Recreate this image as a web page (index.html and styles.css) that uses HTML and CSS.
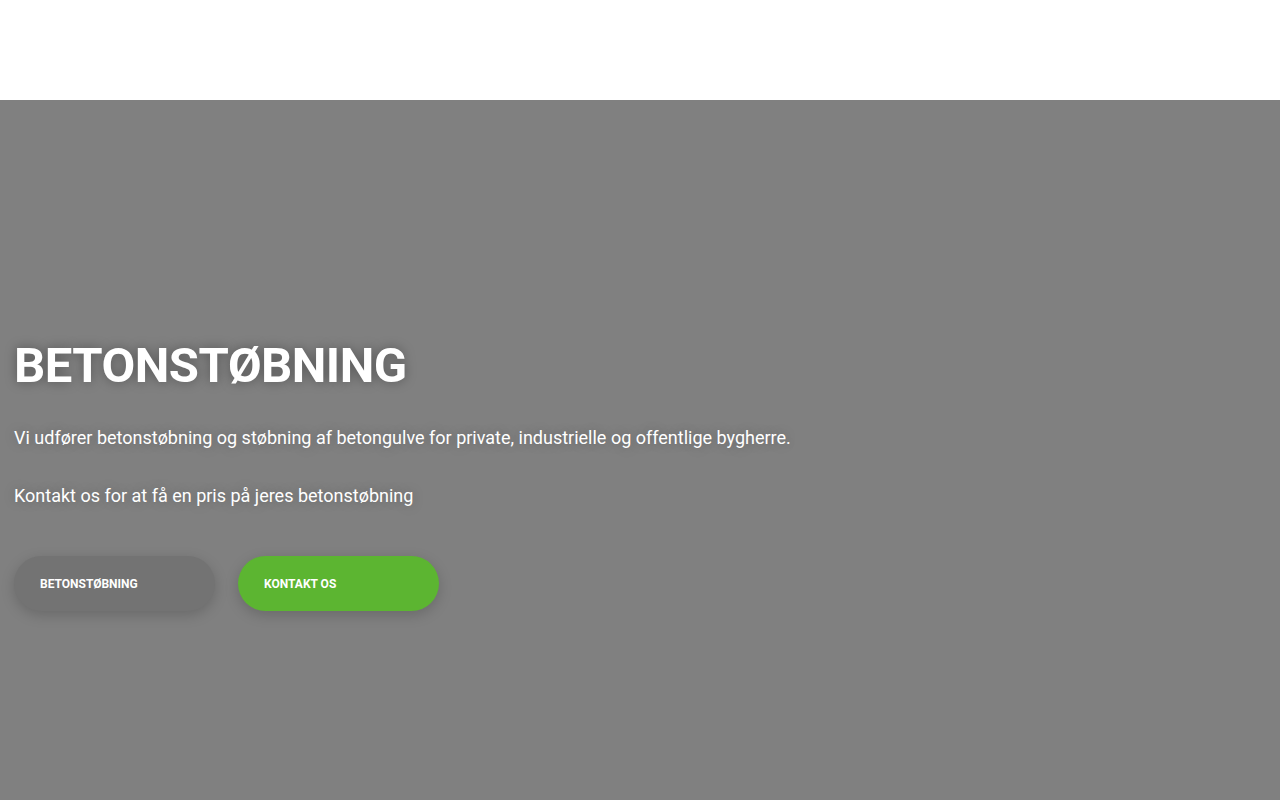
FILE: index.html
```html
<!DOCTYPE html>
<html lang="da">
<head>
<meta charset="utf-8">
<title>Betonstøbning</title>
<link rel="stylesheet" href="styles.css">
</head>
<body>
<header class="site-header"></header>
<section class="hero">
  <div class="hero-content">
    <h1 class="hero-title">BETONSTØBNING</h1>
    <p class="hero-text">Vi udfører betonstøbning og støbning af betongulve for private, industrielle og offentlige bygherre.</p>
    <p class="hero-text">Kontakt os for at få en pris på jeres betonstøbning</p>
    <div class="hero-actions">
      <a class="btn btn-gray" href="#">BETONSTØBNING</a>
      <a class="btn btn-green" href="#">KONTAKT OS</a>
    </div>
  </div>
</section>
</body>
</html>
```
FILE: styles.css
```css
* { box-sizing: border-box; }
html, body { margin: 0; padding: 0; }
body {
  font-family: Roboto, "Liberation Sans", sans-serif;
  background: #808080;
  color: #fff;
}
.site-header {
  height: 100px;
  background: #fff;
}
.hero {
  height: 700px;
  background: #808080;
}
.hero-content {
  padding: 236px 14px 0;
}
.hero-title {
  margin: 0;
  font-size: 49px;
  line-height: 60px;
  font-weight: 700;
  letter-spacing: -0.5px;
  text-shadow: 0 0 12px rgba(0,0,0,0.35);
}
.hero-text {
  margin: 30px 0 0;
  font-size: 18px;
  line-height: 24px;
  text-shadow: 0 0 12px rgba(0,0,0,0.25);
}
.hero-text + .hero-text { margin-top: 34px; }
.hero-actions {
  display: flex;
  gap: 23px;
  margin-top: 48px;
}
.btn {
  display: flex;
  align-items: center;
  width: 201px;
  height: 55px;
  padding-left: 26px;
  border-radius: 28px;
  font-size: 12px;
  font-weight: 700;
  color: #fff;
  text-decoration: none;
  box-shadow: 0 4px 14px rgba(0,0,0,0.18);
}
.btn-gray { background: #737373; }
.btn-green { background: #5cb531; }
```
